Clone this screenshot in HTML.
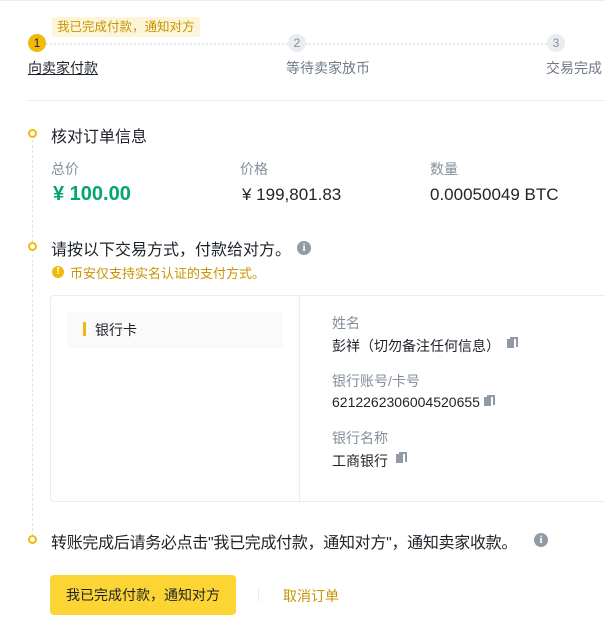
<!DOCTYPE html>
<html><head><meta charset="utf-8"><style>
*{margin:0;padding:0;box-sizing:border-box}
body{width:605px;height:638px;background:#fff;font-family:"Liberation Sans","Noto Sans CJK SC",sans-serif;color:#1e2329;position:relative;overflow:hidden}
.a{position:absolute;white-space:nowrap}
.top{left:0;top:0;width:605px;height:1px;background:#eaecef}
.circ{width:18px;height:18px;border-radius:50%;text-align:center;line-height:18px;font-size:12px}
.dot{width:9px;height:9px;border-radius:50%;border:2px solid #f0b90b;background:#fff}
.lbl{font-size:14px;color:#848e9c}
.val{font-size:17px;color:#1e2329}
.info{width:14px;height:14px;border-radius:50%;background:#929aa5;color:#fff;font-size:11px;font-weight:bold;text-align:center;line-height:14px;font-family:"Liberation Serif",serif}
.copy{width:9px;height:11px}
.copy:before{content:"";position:absolute;left:0;top:2px;width:7px;height:9px;background:#929aa5}
.copy:after{content:"";position:absolute;left:3px;top:0;width:6px;height:8px;border-top:2px solid #929aa5;border-right:2px solid #929aa5}
</style></head><body>
<div class="a top"></div>
<div class="a" style="left:52px;top:17px;height:20px;padding:0 5px;background:#fdf5d9;color:#c99400;font-size:12.5px;line-height:20px;border-radius:2px">我已完成付款，通知对方</div>
<div class="a" style="left:46px;top:43px;width:242px;border-top:2px dotted #e6e8ea"></div>
<div class="a" style="left:306px;top:43px;width:241px;border-top:2px dotted #e6e8ea"></div>
<div class="a circ" style="left:28px;top:34px;background:#f0b90b;color:#1e2329">1</div>
<div class="a circ" style="left:288px;top:34px;background:#eaecef;color:#848e9c">2</div>
<div class="a circ" style="left:547px;top:34px;background:#eaecef;color:#848e9c">3</div>
<div class="a" style="left:28px;top:58px;font-size:14px;text-decoration:underline">向卖家付款</div>
<div class="a" style="left:286px;top:58px;font-size:14px;color:#707a8a">等待卖家放币</div>
<div class="a" style="left:546px;top:58px;font-size:14px;color:#707a8a">交易完成</div>
<div class="a" style="left:28px;top:100px;width:577px;height:1px;background:#eaecef"></div>

<div class="a" style="left:32px;top:140px;height:396px;border-left:1px dashed #e0e2e5"></div>
<div class="a dot" style="left:28px;top:129px"></div>
<div class="a" style="left:51px;top:123px;font-size:16px">核对订单信息</div>
<div class="a lbl" style="left:51px;top:159px">总价</div>
<div class="a lbl" style="left:240px;top:159px">价格</div>
<div class="a lbl" style="left:430px;top:159px">数量</div>
<div class="a" style="left:53px;top:183px;font-size:20px;font-weight:bold;color:#03a66d">¥ 100.00</div>
<div class="a val" style="left:242px;top:185px">¥ 199,801.83</div>
<div class="a val" style="left:430px;top:185px">0.00050049 BTC</div>

<div class="a dot" style="left:28px;top:242px"></div>
<div class="a" style="left:51px;top:236px;font-size:16px">请按以下交易方式，付款给对方。</div>
<div class="a info" style="left:297px;top:241px">i</div>
<div class="a" style="left:52px;top:266px;width:12px;height:12px;border-radius:50%;background:#f0b90b;color:#fff;font-size:10px;font-weight:bold;text-align:center;line-height:12px">!</div>
<div class="a" style="left:70px;top:263px;font-size:13px;color:#c99400">币安仅支持实名认证的支付方式。</div>

<div class="a" style="left:50px;top:295px;width:570px;height:207px;border:1px solid #eaecef;border-radius:4px"></div>
<div class="a" style="left:299px;top:296px;width:1px;height:205px;background:#eaecef"></div>
<div class="a" style="left:67px;top:312px;width:216px;height:36px;background:#fafafa"></div>
<div class="a" style="left:83px;top:322px;width:3px;height:14px;background:#f0b90b"></div>
<div class="a" style="left:95px;top:320px;font-size:14px">银行卡</div>
<div class="a lbl" style="left:332px;top:313px">姓名</div>
<div class="a" style="left:332px;top:336px;font-size:14px">彭祥（切勿备注任何信息）</div>
<div class="a copy" style="left:507px;top:337px"></div>
<div class="a lbl" style="left:332px;top:371px">银行账号/卡号</div>
<div class="a" style="left:332px;top:394px;font-size:14px">6212262306004520655</div>
<div class="a copy" style="left:484px;top:395px"></div>
<div class="a lbl" style="left:332px;top:428px">银行名称</div>
<div class="a" style="left:332px;top:451px;font-size:14px">工商银行</div>
<div class="a copy" style="left:396px;top:452px"></div>

<div class="a dot" style="left:28px;top:535px"></div>
<div class="a" style="left:51px;top:529px;font-size:16px;letter-spacing:-0.3px">转账完成后请务必点击"我已完成付款，通知对方"，通知卖家收款。</div>
<div class="a info" style="left:534px;top:533px">i</div>
<div class="a" style="left:50px;top:575px;width:186px;height:40px;background:#fcd535;border-radius:4px;font-size:14px;text-align:center;line-height:40px">我已完成付款，通知对方</div>
<div class="a" style="left:258px;top:588px;width:1px;height:14px;background:#eaecef"></div>
<div class="a" style="left:283px;top:586px;font-size:14px;color:#c99400">取消订单</div>
</body></html>
